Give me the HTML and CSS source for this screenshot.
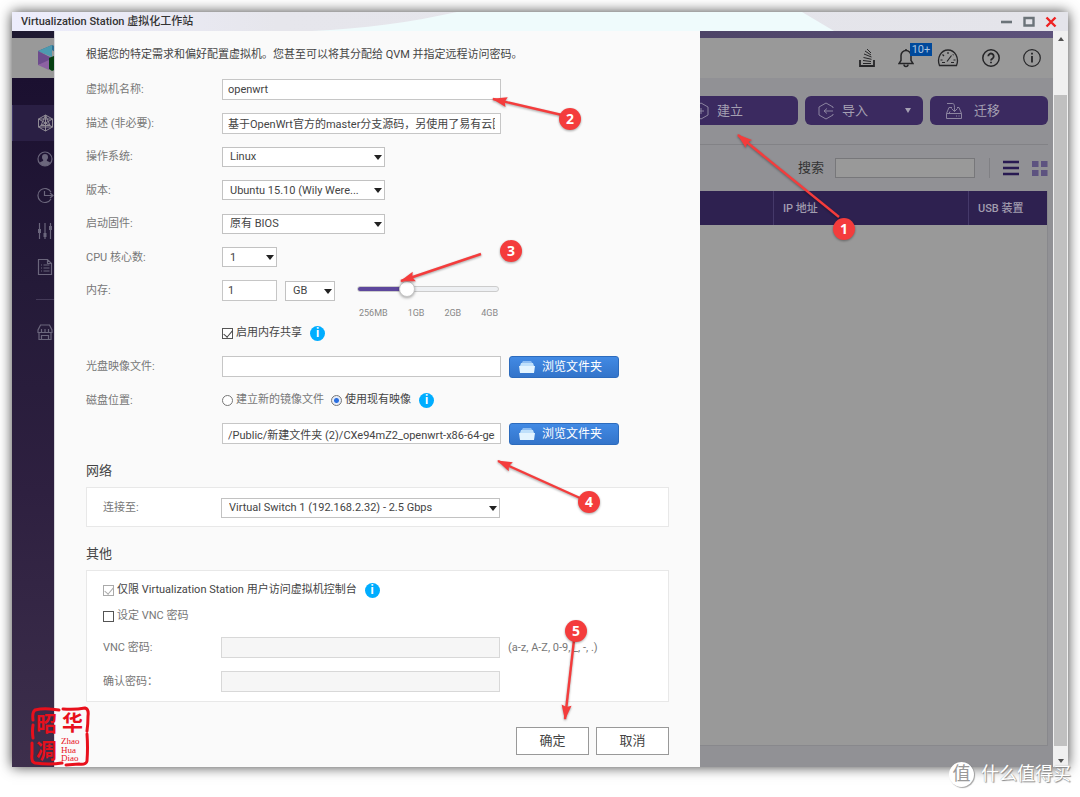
FILE: index.html
```html
<!DOCTYPE html>
<html lang="zh-CN">
<head>
<meta charset="utf-8">
<title>Virtualization Station 虚拟化工作站</title>
<link rel="stylesheet" href="styles.css">
</head>
<body>
<div class="window">
  <header class="titlebar">
    <svg class="titlebar-art" viewBox="0 0 1056 19" preserveAspectRatio="none" aria-hidden="true">
      <defs><linearGradient id="tb"><stop offset="0" stop-color="#ededfc"/><stop offset=".25" stop-color="#e6e6ec"/><stop offset="1" stop-color="#e4e4ea"/></linearGradient></defs>
      <path fill="url(#tb)" d="M0 0h1056v19H0z"/>
      <path fill="#effbfc" d="M300 19C350 17 400 10 445 0H790L822 19z"/>
    </svg>
    <h1 class="title">Virtualization Station 虚拟化工作站</h1>
    <div class="win-buttons">
      <button class="win-btn" aria-label="最小化"><svg width="12" height="12" viewBox="0 0 12 12"><path d="M0 6h11" stroke="#6b7379" stroke-width="2.6"/></svg></button>
      <button class="win-btn" aria-label="最大化"><svg width="12" height="12" viewBox="0 0 12 12"><path d="M1.500 2h9v7.500h-9z" fill="none" stroke="#6b7379" stroke-width="2.400"/></svg></button>
      <button class="win-btn" aria-label="关闭"><svg width="12" height="12" viewBox="0 0 12 12"><path d="M1.500 1.500l9 9M10.500 1.500l-9 9" stroke="#ee2222" stroke-width="2.400"/></svg></button>
    </div>
  </header>

  <div class="body">
    <div class="app">
      <div class="strip"></div>
      <div class="topbar">
        <svg class="logo" width="30" height="26" viewBox="0 0 30 26"><path fill="#2f7193" d="M15 0L1 6l8 3 6-4 6 4 8-3z"/><path fill="#4d9ab0" d="M1 6L15 0v12z"/><path fill="#6d4b8d" d="M1 6l14 7-3 4-11 3z"/><path fill="#8d62a2" d="M1 20l11-5v10z"/><path fill="#064012" d="M12 13l17-7v14l-14 6-3-2z"/></svg>
        <div class="top-icons">
          <svg width="16" height="20" viewBox="0 0 16 20" class="ti"><path d="M1 12v6h14v-6" stroke-width="1.800"/><path d="M4 15.500h8M4 12.500l8 1M4.500 9.500l8 1.800M5 6l7.500 3M6 3l6 4M8 1l4 4" stroke-width="1"/></svg>
          <span class="bell">
            <svg width="16" height="20" viewBox="0 0 16 20" class="ti"><path d="M1 15.500h14l-2-3V7.500a5 5 0 0 0-10 0v5z" stroke-width="1.500"/><path d="M6 16.500a2 2 0 0 0 4 0M8 1v2" stroke-width="1.500"/></svg>
            <span class="badge">10+</span>
          </span>
          <svg width="22" height="20" viewBox="0 0 22 20" class="ti"><path d="M2.500 17.500C-.5 10 4 2 11 2s11.500 8 8.500 15.500z" stroke-width="1.300"/><path d="M11 4v2M5.500 6.500L7 8M16.500 6.500l-.7.700M3.500 12h2M16.500 12h2M10 13.500l4.500-6M5 14.500h3M14 14.500h3" stroke-width="1.200"/></svg>
          <svg width="18" height="20" viewBox="0 0 18 20" class="ti"><circle cx="9" cy="10" r="8.200" stroke-width="1.500"/><path d="M6.300 8.300a2.700 2.700 0 1 1 4.200 2.200C9.500 11.100 9 11.500 9 12.600M9 13.700v1.600" stroke-width="1.800"/></svg>
          <svg width="18" height="20" viewBox="0 0 18 20" class="ti"><circle cx="9" cy="10" r="8.300" stroke-width="1.200"/><path d="M9 8v6.500M9 4.800v1.800" stroke-width="1.800"/></svg>
        </div>
      </div>
      <div class="workspace">
        <nav class="sidebar">
          <a class="side-item active" href="#" aria-label="虚拟机"><svg width="17" height="18" viewBox="0 0 17 18"><path d="M8.500 1l7 4v8l-7 4-7-4V5zM8.500 1v16M1.500 5l14 8M15.500 5l-14 8M8.500 1L4 11.500h9zM1.500 5h14M1.500 13h14"/></svg></a>
          <a class="side-item" href="#" aria-label="用户"><svg width="17" height="18" viewBox="0 0 17 18"><circle cx="8" cy="9" r="7"/><path class="solid" d="M8 4c2 0 3 1.200 3 3s-.7 2.500-1.300 3c0 1.600 3 1.200 3.500 3C12 15 10 16 8 16s-4-1-5.200-3c.5-1.800 3.500-1.400 3.500-3C5.700 9.500 5 8.800 5 7s1-3 3-3z"/></svg></a>
          <a class="side-item" href="#" aria-label="计划"><svg width="17" height="18" viewBox="0 0 17 18"><path d="M14 6A7 7 0 1 0 14 13M7.500 5v4.500H16M13 7l3 2.500-3 2.500"/></svg></a>
          <a class="side-item" href="#" aria-label="设置"><svg width="17" height="18" viewBox="0 0 17 18"><path d="M2.500 1v16M8 1v16M13.500 1v16" /><path class="solid" d="M1 7h3v4H1zM6.500 11h3v4h-3zM12 4h3v4h-3z"/></svg></a>
          <a class="side-item" href="#" aria-label="日志"><svg width="17" height="18" viewBox="0 0 17 18"><path d="M1.500 1.500h9l4 4v11h-13zM10.500 1.500v4h4M4 7h1M6.500 7h6M4 10h1M6.500 10h6M4 13h1M6.500 13h6"/></svg></a>
          <hr class="side-rule">
          <a class="side-item" href="#" aria-label="市场"><svg width="17" height="18" viewBox="0 0 17 18"><path d="M3.500 2h9l2.500 5v2.500H1V7zM2 9.500v7h12v-7M4.500 12.500h7v4h-7zM4.500 6v3M8 6v3M11.500 6v3"/></svg></a>
        </nav>
        <main class="main">
          <div class="actions">
            <button class="action"><svg width="18" height="18" viewBox="0 0 18 18"><path d="M9 1l7 4v8l-7 4-7-4V5zM9 6v6M6 9h6"/></svg>建立</button>
            <button class="action"><svg width="18" height="18" viewBox="0 0 18 18"><path d="M16 6V5L9 1 2 5v8l7 4 7-4v-1M7 9h9M10 6.500L7 9l3 2.500"/></svg>导入<span class="caret"></span></button>
            <button class="action roomy"><svg width="18" height="18" viewBox="0 0 18 18"><path d="M1.500 11.500h15v5h-15zM1.500 11.500L4 5.500h3M16.500 11.500L14 5.500h-2M2 1.500h5c2.500 0 2.500 1 2.500 8M6.500 6.500l3 3 3-3M5 9.500l-1 2M11 14h1M13.500 14h1"/></svg>迁移</button>
          </div>
          <div class="filter">
            <label for="search">搜索</label>
            <input id="search" class="search" type="text">
            <span class="vr"></span>
            <button class="view" aria-label="列表"><svg width="16" height="16" viewBox="0 0 16 16"><path d="M0 2h16M0 8h16M0 14h16" stroke="#281a52" stroke-width="2.400"/></svg></button>
            <button class="view" aria-label="网格"><svg width="16" height="16" viewBox="0 0 16 16"><path d="M0 1h6.500v6H0zM9 1h6.500v6H9zM0 10h6.500v6H0zM9 10h6.500v6H9z" fill="#5d5380"/></svg></button>
          </div>
          <table class="vms">
            <thead><tr><th></th><th class="c-ip">IP 地址</th><th class="c-usb">USB 装置</th></tr></thead>
            <tbody><tr><td colspan="3"></td></tr></tbody>
          </table>
        </main>
      </div>
    </div>
    <div class="scroll"><span class="tri up"></span><span class="thumb"></span><span class="tri down"></span></div>

    <form class="modal" onsubmit="return false">
      <p class="intro">根据您的特定需求和偏好配置虚拟机。您甚至可以将其分配给 QVM 并指定远程访问密码。</p>
      <div class="rows basics">
        <div class="row"><label for="name">虚拟机名称:</label><input id="name" class="field wide" type="text" value="openwrt"></div>
        <div class="row"><label for="desc">描述 (非必要):</label><input id="desc" class="field wide" type="text" value="基于OpenWrt官方的master分支源码，另使用了易有云团队的软件包"></div>
        <div class="row"><label for="os">操作系统:</label><span class="sel mid"><select id="os"><option>Linux</option></select></span></div>
        <div class="row"><label for="ver">版本:</label><span class="sel mid"><select id="ver"><option>Ubuntu 15.10 (Wily Were...</option></select></span></div>
        <div class="row"><label for="fw">启动固件:</label><span class="sel mid"><select id="fw"><option>原有 BIOS</option></select></span></div>
        <div class="row"><label for="cpu">CPU 核心数:</label><span class="sel small"><select id="cpu"><option>1</option></select></span></div>
        <div class="row"><label for="mem">内存:</label><input id="mem" class="field small" type="text" value="1">
          <span class="sel unit"><select aria-label="单位"><option>GB</option></select></span>
          <input class="slider" type="range" min="0" max="3" value="1" aria-label="内存大小"></div>
      </div>
      <div class="ticks"><span>256MB</span><span>1GB</span><span>2GB</span><span>4GB</span></div>
      <div class="share"><label class="opt dark"><input class="check" type="checkbox" checked>启用内存共享</label><span class="info">i</span></div>
      <div class="rows disks">
        <div class="row"><label for="iso">光盘映像文件:</label><input id="iso" class="field wide" type="text">
          <button class="browse"><svg width="16" height="14" viewBox="0 0 16 14"><path fill="#8dbdf2" d="M4 1h8l2 3H2z"/><path fill="#bfe0fb" d="M2 3h12l1 3H1z"/><path fill="#e3f4ff" d="M0 6h16l-1 7H1z"/></svg>浏览文件夹</button></div>
        <div class="row"><span class="lab">磁盘位置:</span>
          <label class="opt"><input class="radio" type="radio" name="disk">建立新的镜像文件</label>
          <label class="opt dark second"><input class="radio" type="radio" name="disk" checked>使用现有映像</label><span class="info">i</span></div>
        <div class="row"><span class="lab"></span><input class="field wide" type="text" aria-label="映像路径" value="/Public/新建文件夹 (2)/CXe94mZ2_openwrt-x86-64-generic.img">
          <button class="browse"><svg width="16" height="14" viewBox="0 0 16 14"><path fill="#8dbdf2" d="M4 1h8l2 3H2z"/><path fill="#bfe0fb" d="M2 3h12l1 3H1z"/><path fill="#e3f4ff" d="M0 6h16l-1 7H1z"/></svg>浏览文件夹</button></div>
      </div>

      <h2 class="section">网络</h2>
      <div class="box net">
        <div class="row inner"><label for="net">连接至:</label><span class="sel wide"><select id="net"><option>Virtual Switch 1 (192.168.2.32) - 2.5 Gbps</option></select></span></div>
      </div>
      <h2 class="section">其他</h2>
      <div class="box other">
        <div class="line"><label class="opt dark"><input class="check" type="checkbox" checked disabled>仅限 Virtualization Station 用户访问虚拟机控制台</label><span class="info">i</span></div>
        <div class="line"><label class="opt"><input class="check" type="checkbox">设定 VNC 密码</label></div>
        <div class="rows pw">
          <div class="row inner"><label for="pw1">VNC 密码:</label><input id="pw1" class="field wide" type="password" disabled><span class="hint">(a-z, A-Z, 0-9, _, -, .)</span></div>
          <div class="row inner"><label for="pw2">确认密码：</label><input id="pw2" class="field wide" type="password" disabled></div>
        </div>
      </div>
      <div class="footer"><button class="btn">确定</button><button class="btn">取消</button></div>
    </form>
  </div>
</div>

<svg class="notes" width="1080" height="797" viewBox="0 0 1080 797">
  <defs><marker id="head" viewBox="0 0 20 12" refX="18" refY="6" markerWidth="20" markerHeight="12" markerUnits="userSpaceOnUse" orient="auto"><path d="M19 6L4 1l2 5-2 5z" fill="#f43c3c"/></marker></defs>
  <g class="arrows">
    <path d="M839 217L738 135"/><path d="M562 115L493 99"/><path d="M481 254L401 281"/><path d="M580 498L498 461"/><path d="M574 640L565 719"/>
  </g>
  <g class="dots"><circle cx="844" cy="229" r="11"/><circle cx="570" cy="119" r="11"/><circle cx="511" cy="251" r="11"/><circle cx="589" cy="502" r="11"/><circle cx="576" cy="631" r="11"/></g>
  <g class="nums"><text x="844" y="234">1</text><text x="570" y="124">2</text><text x="511" y="256">3</text><text x="589" y="507">4</text><text x="576" y="636">5</text></g>
  <g class="seal">
    <path d="M33 720q-1-8 2-10 8-2 15-1l9 1M63 709q12 1 22-1 4 1 3 8 0 8-1 15M87 734q1 14 0 27-1 4-8 3l-13 1M62 763q-12 2-27 0-4-1-3-9V743M33 738q-1-7 0-13"/>
    <text class="big" x="36" y="731">昭</text><text class="big" x="62" y="730">华</text><text class="big" x="36" y="758">凋</text>
    <text class="tiny" x="61" y="744">Zhao</text><text class="tiny" x="61" y="753">Hua</text><text class="tiny" x="61" y="761">Diao</text>
  </g>
</svg>
<div class="watermark"><span class="mark">值</span><span>什么值得买</span></div>
</body>
</html>
```
FILE: styles.css
```css
* { box-sizing: border-box; }
body {
  margin: 0;
  min-height: 100vh;
  padding: 12px 12px 30px;
  display: flex;
  background: #fff;
  color: #444;
  font: 11px/16px Roboto, "Noto Sans CJK SC", sans-serif;
}
button, input, select { font: inherit; color: inherit; margin: 0; }
button { border: 0; padding: 0; background: none; }

.window { flex: 1; display: flex; flex-direction: column; box-shadow: 0 0 12px rgba(0, 0, 0, .75); }
.titlebar { position: relative; height: 19px; display: flex; align-items: center; justify-content: space-between; padding: 0 11px 0 9px; }
.titlebar-art { position: absolute; inset: 0; width: 100%; height: 100%; }
.title { position: relative; margin: 0; font-size: 11px; font-weight: 500; line-height: 18px; color: #333; }
.win-buttons { position: relative; display: flex; gap: 10px; }
.win-btn { height: 12px; line-height: 0; }

.body { position: relative; flex: 1; display: flex; }
.app { flex: 1; display: flex; flex-direction: column; }
.strip { height: 7px; background: linear-gradient(90deg, #1d1830, #4a4163 60%, #5d527b); }
.topbar { height: 40px; padding: 0 12px 0 25px; background: #999; display: flex; align-items: center; justify-content: space-between; }
.top-icons { display: flex; gap: 23px; align-items: center; }
.ti { fill: none; stroke: #262628; display: block; }
.bell { position: relative; }
.badge { position: absolute; left: 12px; top: -5px; width: 22px; height: 13px; background: #00499b; color: #aac4e0; line-height: 14px; text-align: center; }
.workspace { flex: 1; display: flex; }

.sidebar { width: 120px; padding-top: 27px; background: linear-gradient(#1b1030, #241a38 30%, #2e2040 60%, #3d2f4c); }
.side-item { display: flex; align-items: center; height: 36px; padding-left: 25px; }
.side-item.active { background: #2a1f44; border-left: 1px solid #3c3264; padding-left: 24px; }
.side-item svg { fill: none; stroke: #6b667c; stroke-width: 1.2; }
.side-item.active svg { stroke: #8f8a94; stroke-width: 1; }
.side-item .solid { fill: #6b667c; stroke: none; }
.side-rule { margin: 14px 0 14px 24px; border: 0; border-top: 1px solid #443a58; }

.main { flex: 1; padding: 18px 5px 21px 0; background: #919195; display: flex; flex-direction: column; }
.actions { display: flex; justify-content: flex-end; gap: 7px; padding-bottom: 19px; border-bottom: 1px solid #828286; }
.action { width: 118px; height: 29px; padding: 0 12px; display: flex; align-items: center; gap: 7px; border-radius: 6px; background: #3b2a60; color: #a5a0b2; font-size: 13px; }
.action.roomy { padding: 0 15px; gap: 11px; }
.action svg { fill: none; stroke: #8c84a0; }
.caret { margin-left: auto; border: 3px solid transparent; border-top: 5px solid #a5a0b2; border-bottom: 0; }
.filter { display: flex; justify-content: flex-end; align-items: center; height: 46px; color: #333; font-size: 13px; }
.search { width: 140px; height: 20px; margin: 0 14px 0 11px; background: #999; border: 1px solid #77777a; }
.vr { width: 1px; height: 20px; background: #808084; }
.view { margin-left: 13px; height: 16px; line-height: 0; }
.vms { flex: 1; display: flex; flex-direction: column; border-collapse: collapse; background: #999; border: 1px solid #88888c; border-top: 0; }
.vms thead { background: #2e2150; color: #a29daf; }
.vms tr { display: flex; height: 34px; }
.vms th { flex: 1; font-weight: 500; text-align: left; line-height: 35px; padding: 0 9px; }
.vms .c-ip { flex: 0 0 195px; border-left: 1px solid #45396a; }
.vms .c-usb { flex: 0 0 79px; border-left: 1px solid #45396a; }

.scroll { width: 15px; background: #f0f0f0; display: flex; flex-direction: column; align-items: center; padding: 6px 0 4px; }
.thumb { flex: 1; width: 13px; margin: 54px 0 13px; background: #c0c0c0; }
.tri { border: 3px solid transparent; }
.up { border-top: 0; border-bottom: 4px solid #505050; }
.down { border-bottom: 0; border-top: 4px solid #505050; }

.modal { position: absolute; left: 42px; top: 0; bottom: 0; width: 646px; padding: 16px 31px 12px; background: #fafafa; border-left: 1px solid #d8d8dc; display: flex; flex-direction: column; }
.intro { margin: 0 0 16px; }
.rows { display: flex; flex-direction: column; justify-content: space-between; }
.basics { height: 222px; }
.disks { height: 88px; }
.row { display: flex; align-items: center; height: 21px; color: #777; }
.row > label:first-child, .lab { flex: 0 0 136px; padding-top: 1px; color: #777; }
.row.inner > label:first-child { flex-basis: 118px; }
.field { height: 21px; padding: 0 5px; border: 1px solid #c6c6c6; background: #fff; color: #444; }
.field:disabled { background: #f6f6f6; border-color: #d8d8d8; }
.wide { width: 279px; }
.mid { width: 163px; }
.small { width: 55px; }
.unit { width: 50px; margin-left: 8px; }
.sel { position: relative; height: 20px; }
.sel select { appearance: none; width: 100%; height: 20px; padding: 1px 16px 0 7px; border: 1px solid #c2c2c2; border-radius: 0; background: #fff; color: #444; display: block; }
.sel::after { content: ""; position: absolute; right: 3px; top: 8px; border: 4px solid transparent; border-top: 5px solid #222; border-bottom: 0; pointer-events: none; }
.slider { appearance: none; width: 142px; height: 16px; margin: 0 0 4px 22px; background: none; }
.slider::-webkit-slider-runnable-track { height: 6px; border-radius: 3px; border: 1px solid #ccc; background: linear-gradient(90deg, #5d479c 35%, #eef0f3 35%); }
.slider::-webkit-slider-thumb { appearance: none; width: 16px; height: 16px; margin-top: -6px; border-radius: 50%; background: #fff; border: 1px solid #c8c8c8; box-shadow: 0 1px 3px rgba(0, 0, 0, .35); }
.ticks { margin: 4px 0 0 273px; width: 139px; display: flex; justify-content: space-between; color: #888; font-size: 9px; }
.share { display: flex; align-items: center; margin: 4px 0 15px 136px; }
.opt { display: flex; align-items: center; gap: 3px; color: #777; }
.opt.dark { color: #444; }
.opt.second { margin-left: 7px; }
.check { appearance: none; width: 11px; height: 11px; border: 1px solid #555; background: #fff; display: grid; place-items: center; }
.check:checked::after { content: ""; width: 4px; height: 8px; border: solid #444; border-width: 0 1px 1px 0; transform: rotate(40deg) translate(0, -1px); }
.check:disabled { border-color: #aaa; }
.check:disabled::after { border-color: #aaa; }
.radio { appearance: none; width: 11px; height: 11px; border: 1px solid #777; border-radius: 50%; background: #fff; }
.radio:checked { background: radial-gradient(circle, #2a6fe0 0 2px, #e6ecf8 3px); }
.info { width: 15px; height: 15px; margin-left: 8px; border-radius: 50%; background: #00adff; color: #fff; font-weight: 700; font-size: 12px; line-height: 15px; text-align: center; }
.browse { width: 110px; height: 22px; margin-left: 8px; padding-left: 9px; display: flex; align-items: center; gap: 7px; border: 1px solid #2c6bbd; border-radius: 3px; background: linear-gradient(#428ae4, #3374ca); color: #fff; font-size: 12px; }
.section { margin: 19px 0 8px; font-size: 13px; line-height: 16px; font-weight: 400; color: #444; }
.box { border: 1px solid #e8e8e8; background: #fff; padding: 9px 16px; }
.net { padding-bottom: 8px; }
.other { padding-top: 10px; }
.line { display: flex; align-items: center; height: 18px; margin-bottom: 8px; }
.pw { margin-top: 12px; gap: 13px; }
.hint { margin-left: 8px; }
.footer { margin-top: 25px; display: flex; justify-content: flex-end; gap: 7px; }
.btn { width: 73px; height: 28px; border: 1px solid #999; background: #fff; font-size: 13px; }

.notes { position: absolute; left: 0; top: 0; pointer-events: none; }
.arrows { fill: none; stroke: #f43c3c; stroke-width: 2.4; filter: drop-shadow(0 1px 1px rgba(0, 0, 0, .35)); }
.arrows path { marker-end: url(#head); }
.dots { fill: #f43c3c; filter: drop-shadow(0 1px 1px rgba(0, 0, 0, .35)); }
.nums { fill: #fff; font: 700 14px "Noto Sans", sans-serif; text-anchor: middle; }
.seal path { fill: none; stroke: #e8101c; stroke-width: 3; stroke-linecap: round; }
.seal text { fill: #e8101c; }
.big { font: 700 21px "Noto Sans CJK SC", sans-serif; }
.tiny { font: 9px "Liberation Serif", serif; }
.watermark { position: absolute; right: 9px; bottom: 10px; display: flex; align-items: center; gap: 7px; color: #fff; font-size: 18px; line-height: 26px; text-shadow: 1px 1px 1px #888, 0 0 1px #999; }
.mark { width: 25px; height: 25px; border-radius: 50%; background: #fff; color: #999; text-align: center; line-height: 24px; text-shadow: none; box-shadow: 1px 1px 1px rgba(0, 0, 0, .35); }
```
